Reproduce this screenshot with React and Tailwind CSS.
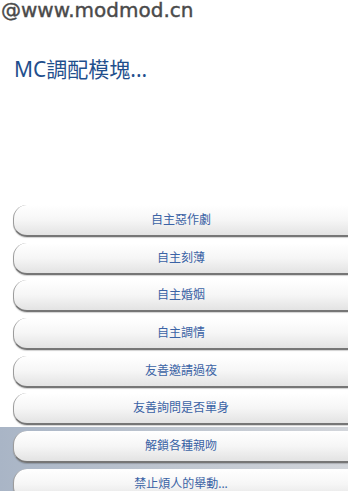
const items = [
  '自主惡作劇',
  '自主刻薄',
  '自主婚姻',
  '自主調情',
  '友善邀請過夜',
  '友善詢問是否單身',
  '解鎖各種親吻',
  '禁止煩人的舉動...',
]

const cjk = { fontFamily: '"Noto Sans", "Noto Sans CJK TC", sans-serif' }

function MenuButton({ label }) {
  return (
    <div className="h-[37.7px] pt-[4px] pl-[13px]">
      <div
        className="h-[32px] w-[335px] rounded-l-[14px] border-l border-b-2 border-l-[#9c9c9c] border-b-[#767676]
                   bg-gradient-to-b from-[#ffffff] via-[#f6f6f6] to-[#e3e3e3]
                   shadow-[0_1px_1px_rgba(0,0,0,0.18)] flex items-center justify-center"
      >
        <span className="text-[12px] leading-none text-[#3b63a5]" style={cjk}>{label}</span>
      </div>
    </div>
  )
}

export default function App() {
  return (
    <div className="w-[348px] h-[491px] overflow-hidden bg-white flex flex-col">

      {/* watermark */}
      <div
        className="h-[20px] text-[20px] leading-none text-[#4a4a4a] pl-[1px] whitespace-nowrap"
        style={{ fontFamily: '"DejaVu Sans", sans-serif', WebkitTextStroke: '0.4px #4a4a4a' }}
      >
        @www.modmod.cn
      </div>

      {/* title */}
      <div className="mt-[39px] pl-[14px] text-[21px] leading-none text-[#1f4f8d]" style={cjk}>
        MC調配模塊...
      </div>

      {/* menu */}
      <div className="mt-[121px] flex flex-col">
        {items.slice(0, 6).map((label) => (
          <MenuButton key={label} label={label} />
        ))}
        <div className="bg-gradient-to-r from-[#a9b5c6] via-[#bfc6d0] to-[#d3d6db]">
          {items.slice(6).map((label) => (
            <MenuButton key={label} label={label} />
          ))}
        </div>
      </div>

    </div>
  )
}
